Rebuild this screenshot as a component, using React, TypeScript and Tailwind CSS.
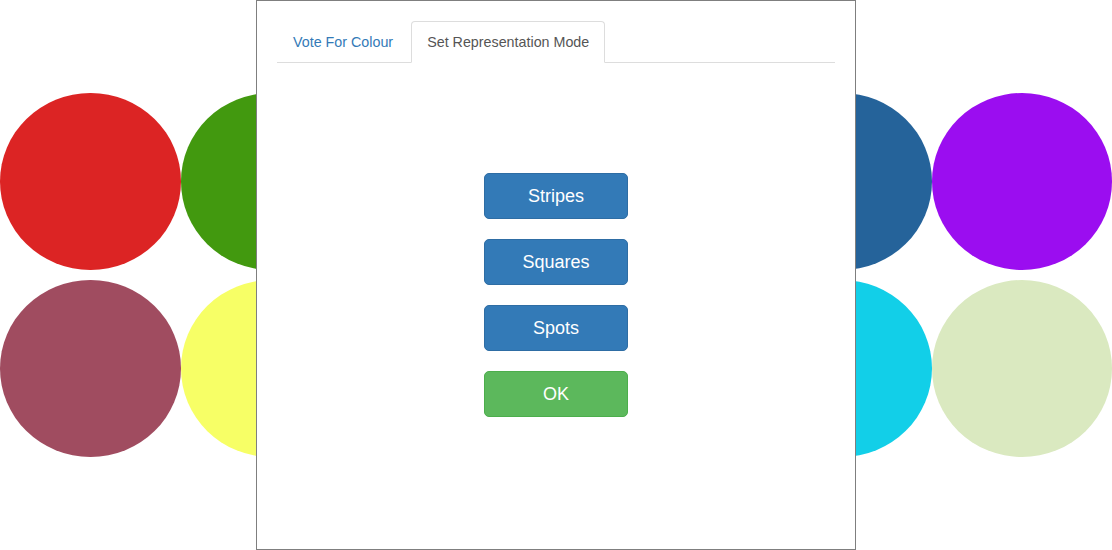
import React from 'react';

const topRow = ['#dc2424', '#42990f', '#e07b1a', '#2a7a3a', '#25639a', '#9b0df0'];
const bottomRow = ['#a04c60', '#f7ff66', '#6b3fa0', '#c43a8a', '#12cfe8', '#dae9c0'];

function CircleRow({ colors }: { colors: string[] }) {
  return (
    <div className="flex justify-between">
      <div className="flex">
        {colors.slice(0, 3).map((c, i) => (
          <div key={i} className="w-[180.5px] h-[177px] rounded-[50%]" style={{ backgroundColor: c }} />
        ))}
      </div>
      <div className="flex">
        {colors.slice(3).map((c, i) => (
          <div key={i} className="w-[180.5px] h-[177px] rounded-[50%]" style={{ backgroundColor: c }} />
        ))}
      </div>
    </div>
  );
}

const modes = ['Stripes', 'Squares', 'Spots'];

export default function App() {
  return (
    <div className="relative w-[1112px] h-[550px] overflow-hidden bg-white font-['Liberation_Sans',Arial,sans-serif]">
      {/* Background colour swatches */}
      <div className="pt-[93px] flex flex-col gap-[10px]">
        <CircleRow colors={topRow} />
        <CircleRow colors={bottomRow} />
      </div>

      {/* Modal */}
      <div className="absolute left-[256px] top-0 w-[600px] h-[550px] bg-white border border-[#7f7f7f] p-5">
        <ul className="flex border-b border-[#ddd] text-[14.3px] leading-[20px]">
          <li className="mr-[2px] -mb-px">
            <a className="block px-[15px] py-[10px] border border-transparent rounded-t-[4px] text-[#337ab7]">
              Vote For Colour
            </a>
          </li>
          <li className="-mb-px">
            <a className="block px-[15px] py-[10px] border border-[#ddd] border-b-white rounded-t-[4px] bg-white text-[#555]">
              Set Representation Mode
            </a>
          </li>
        </ul>

        <div className="mt-[110px] flex flex-col items-center gap-5">
          {modes.map(m => (
            <button
              key={m}
              className="w-[144px] h-[46px] rounded-[5px] border border-[#2e6da4] bg-[#337ab7] text-white text-[18px]"
            >
              {m}
            </button>
          ))}
          <button className="w-[144px] h-[46px] rounded-[5px] border border-[#4cae4c] bg-[#5cb85c] text-white text-[18px]">
            OK
          </button>
        </div>
      </div>
    </div>
  );
}
